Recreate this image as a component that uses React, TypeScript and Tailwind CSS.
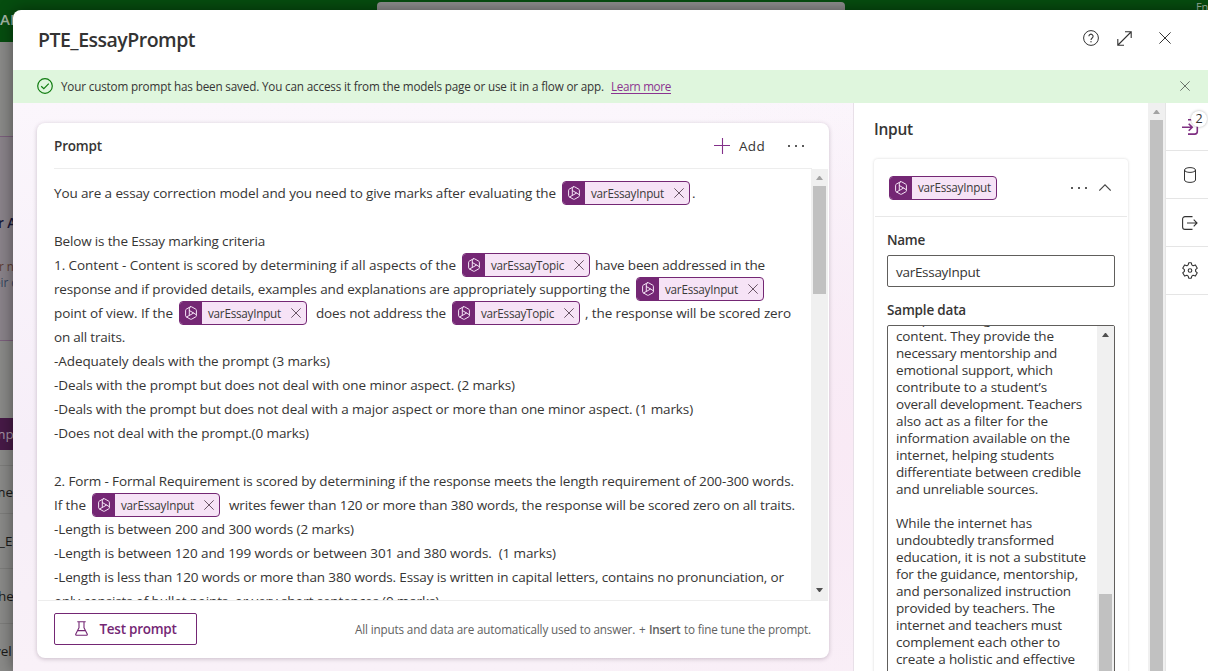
import { useLayoutEffect, useRef } from "react";
import type { ReactNode } from "react";

/* A run of text whose tracking is adjusted so that it fills a given width. */
function Fit({ w, className = "", children }: { w: number; className?: string; children: string }) {
  const ref = useRef<HTMLSpanElement>(null);
  useLayoutEffect(() => {
    const el = ref.current;
    if (!el) return;
    el.style.width = "auto";
    el.style.letterSpacing = "0px";
    const natural = el.getBoundingClientRect().width;
    el.style.letterSpacing = `${(w - 1 - natural) / children.length}px`;
    el.style.width = `${w}px`;
  }, [w, children]);
  return (
    <span ref={ref} className={`inline-block shrink-0 whitespace-pre ${className}`}>
      {children}
    </span>
  );
}

function PromptGlyph() {
  return (
    <svg width="14" height="14" viewBox="0 0 14 14" fill="none" stroke="#f4e4f5" strokeLinejoin="round" strokeLinecap="round">
      <path d="M6.4.8 2.200 3.200a1.200 1.200 0 0 0-.6 1v5.600a1.200 1.200 0 0 0 .6 1l4.200 2.400a1.200 1.200 0 0 0 1.200 0l4.200-2.400a1.200 1.200 0 0 0 .6-1V4.200a1.200 1.200 0 0 0-.6-1L7.600.8a1.200 1.200 0 0 0-1.200 0Z" />
      <path d="M5.300 1.800v7.700L9.600 7 5.300 4.500M9.600 7l2.600 1.700M5.300 9.500l-2.800 1.400" />
    </svg>
  );
}

function Cross({ size, className = "" }: { size: number; className?: string }) {
  return (
    <svg className={className} width={size} height={size} viewBox="0 0 12 12" fill="none" stroke="currentColor" strokeWidth={12 / size}>
      <path d="M.4.4l11.2 11.2M11.6.4.4 11.6" />
    </svg>
  );
}

function Chip({ name, closable = true, className = "" }: { name: string; closable?: boolean; className?: string }) {
  return (
    <span className={`flex h-6 shrink-0 overflow-hidden rounded-[4px] border border-[#742774] bg-[#f6e3f6] ${closable ? "w-32" : "w-27"} ${className}`}>
      <span className="flex w-[22px] shrink-0 items-center justify-center bg-[#742774]">
        <PromptGlyph />
      </span>
      <span className="flex flex-1 items-center pl-[6px] text-[11.7px] leading-[22px] text-[#3b3a39]">
        <Fit w={74} className="-mt-px">{name}</Fit>
        {closable && <Cross size={10} className="ml-[9px] text-[#6a5566]" />}
      </span>
    </span>
  );
}

function Line({ children }: { children?: ReactNode }) {
  return <div className="flex h-6 shrink-0 items-center">{children}</div>;
}

function Arrow({ up, color }: { up?: boolean; color: string }) {
  return (
    <svg width="7" height="4" viewBox="0 0 7 4" fill={color}>
      <path d={up ? "M3 0h1l3 4H0z" : "M0 0h7L4 4H3z"} />
    </svg>
  );
}

function Dots() {
  return (
    <span className="flex gap-[5px]">
      <i className="size-[2px] bg-[#5a5a5a]" />
      <i className="size-[2px] bg-[#5a5a5a]" />
      <i className="size-[2px] bg-[#5a5a5a]" />
    </span>
  );
}

const sample: [string, number][] = [
  ["comprehending the", 118],
  ["content. They provide the", 159],
  ["necessary mentorship and", 162],
  ["emotional support, which", 158],
  ["contribute to a student’s", 152],
  ["overall development. Teachers", 187],
  ["also act as a filter for the", 153],
  ["information available on the", 175],
  ["internet, helping students", 159],
  ["differentiate between credible", 186],
  ["and unreliable sources.", 143],
  ["", 0],
  ["While the internet has", 137],
  ["undoubtedly transformed", 159],
  ["education, it is not a substitute", 191],
  ["for the guidance, mentorship,", 183],
  ["and personalized instruction", 176],
  ["provided by teachers. The", 160],
  ["internet and teachers must", 167],
  ["complement each other to", 165],
  ["create a holistic and effective", 180],
];

function PageBehind() {
  return (
    <div className="flex h-full flex-col bg-[#8a8a88] text-[13.5px] text-[#1b1a19]">
      <div className="flex h-[42px] shrink-0 bg-[#064d0f]">
        <span className="mt-[9px] w-[377px] text-[15px] leading-5 font-semibold text-[#a3b5a4]">AI</span>
        <span className="mt-[2px] w-[468px] rounded-[4px] bg-[#8e8e8e]" />
        <span className="ml-auto w-3 text-[11px] leading-[13px] tracking-[-0.5px] whitespace-nowrap text-[#9db19e]">En</span>
      </div>
      <div className="mt-[94px] flex h-[205px] shrink-0 flex-col border-y border-[#7b5f7c] bg-[#8a838a] whitespace-nowrap">
        <span className="mt-[76px] -ml-[2px] h-5 font-semibold text-[#1a1a3a]">r A</span>
        <span className="mt-[25px] -ml-px h-4 text-[11.7px] leading-4 text-[#5e3d33]">r n</span>
        <span className="-ml-[6px] h-4 text-[11.7px] leading-4 text-[#33435e]">eir c</span>
      </div>
      <div className="mt-[77px] flex h-8 shrink-0 items-center bg-[#471a47] text-[#a595a5]">
        <span className="-ml-[7px]">mp</span>
      </div>
      <div className="mt-[15px] flex h-12 shrink-0 items-center border-t border-[#7d7d7b] pt-1">
        <span className="-ml-[7px]">me</span>
      </div>
      <div className="flex h-[55px] shrink-0 items-center border-t border-[#7d7d7b]">
        <span className="-ml-px">_E</span>
      </div>
      <div className="flex h-[55px] shrink-0 items-center border-t border-[#7d7d7b]">
        <span className="-ml-[2px]">he</span>
      </div>
      <div className="flex h-[55px] shrink-0 items-center border-t border-[#7d7d7b]">
        <span className="-ml-[6px]">vel</span>
      </div>
    </div>
  );
}

function PromptCard() {
  return (
    <section className="flex h-[535px] flex-col overflow-hidden rounded-lg bg-white shadow-[0_1px_4px_rgba(60,30,60,0.25)]">
      <div className="mx-[17px] flex h-[46px] shrink-0 items-center border-b border-[#ededed]">
        <Fit w={49} className="font-semibold">Prompt</Fit>
        <svg className="ml-auto" width="16" height="16" viewBox="0 0 16 16" stroke="#83308a" strokeWidth="1.1">
          <path d="M8.500 0v16M0 7.500h16" />
        </svg>
        <Fit w={27} className="ml-[9px] mr-[22px]">Add</Fit>
        <span className="mr-[8px]">
          <Dots />
        </span>
      </div>
      <div className="flex h-[431px] shrink-0">
        <div className="flex flex-1 flex-col overflow-hidden pt-3 pl-[17px]">
          <Line>
            <Fit w={503}>You are a essay correction model and you need to give marks after evaluating the</Fit>
            <Chip name="varEssayInput" className="ml-[5px]" />
            <span className="ml-[2px]">.</span>
          </Line>
          <Line />
          <Line><Fit w={212}>Below is the Essay marking criteria</Fit></Line>
          <Line>
            <Fit w={403}>1. Content - Content is scored by determining if all aspects of the</Fit>
            <Chip name="varEssayTopic" className="ml-[5px]" />
            <Fit w={171} className="ml-[5px]">have been addressed in the</Fit>
          </Line>
          <Line>
            <Fit w={577}>response and if provided details, examples and explanations are appropriately supporting the</Fit>
            <Chip name="varEssayInput" className="ml-[5px]" />
          </Line>
          <Line>
            <Fit w={120}>point of view. If the</Fit>
            <Chip name="varEssayInput" className="ml-[5px]" />
            <Fit w={131} className="ml-[9px]">does not address the</Fit>
            <Chip name="varEssayTopic" className="ml-[5px]" />
            <Fit w={207} className="ml-[5px]">, the response will be scored zero</Fit>
          </Line>
          <Line><Fit w={72}>on all traits.</Fit></Line>
          <Line><Fit w={277}>-Adequately deals with the prompt (3 marks)</Fit></Line>
          <Line><Fit w={462}>-Deals with the prompt but does not deal with one minor aspect. (2 marks)</Fit></Line>
          <Line><Fit w={640}>-Deals with the prompt but does not deal with a major aspect or more than one minor aspect. (1 marks)</Fit></Line>
          <Line><Fit w={256}>-Does not deal with the prompt.(0 marks)</Fit></Line>
          <Line />
          <Line><Fit w={741}>2. Form - Formal Requirement is scored by determining if the response meets the length requirement of 200-300 words.</Fit></Line>
          <Line>
            <Fit w={33}>If the</Fit>
            <Chip name="varEssayInput" className="ml-[5px]" />
            <Fit w={567} className="ml-[9px]">writes fewer than 120 or more than 380 words, the response will be scored zero on all traits.</Fit>
          </Line>
          <Line><Fit w={301}>-Length is between 200 and 300 words (2 marks)</Fit></Line>
          <Line><Fit w={503}>-Length is between 120 and 199 words or between 301 and 380 words.  (1 marks)</Fit></Line>
          <Line><Fit w={731}>-Length is less than 120 words or more than 380 words. Essay is written in capital letters, contains no pronunciation, or</Fit></Line>
          <Line><Fit w={386}>only consists of bullet points, or very short sentences.(0 marks)</Fit></Line>
        </div>
        <div className="mr-px flex w-[17px] shrink-0 flex-col items-center bg-[#f0f0f0] pt-[7px] pb-[8px]">
          <Arrow up color="#a3a3a3" />
          <span className="mt-[6px] h-[108px] w-[13px] bg-[#c1c1c1]" />
          <span className="mt-auto"><Arrow color="#505050" /></span>
        </div>
      </div>
      <div className="mx-px flex flex-1 items-center border-t border-[#ededed] px-4 pb-[2px]">
        <button className="flex h-8 w-[143px] items-center rounded-[2px] border border-[#742774] pl-5 text-[#742774]">
          <svg width="13" height="15" viewBox="0 0 13 15" fill="none" stroke="#742774" strokeWidth="1.1" strokeLinejoin="round">
            <path d="M2.3.7h8.4M4 .7v6L.8 13a.9.9 0 0 0 .8 1.3h9.8a.9.9 0 0 0 .8-1.3L9 6.700V.7M2.5 9.600h8" />
          </svg>
          <Fit w={78} className="ml-[11px] font-semibold">Test prompt</Fit>
        </button>
        <span className="ml-auto flex text-[11.7px] text-[#616161]">
          <Fit w={284}>All inputs and data are automatically used to answer. </Fit>
          <Fit w={10}>+ </Fit>
          <Fit w={35} className="font-semibold">Insert </Fit>
          <Fit w={128}>to fine tune the prompt.</Fit>
        </span>
      </div>
    </section>
  );
}

function InputPane() {
  return (
    <aside className="flex w-[312px] shrink-0 border-l border-[#e8e0e8] bg-white">
      <div className="flex flex-1 flex-col overflow-hidden px-5">
        <h2 className="mt-[14px] h-6 shrink-0 text-[15.500px] leading-6 font-semibold"><Fit w={40}>Input</Fit></h2>
        <div className="mt-[18px] flex h-[540px] w-[254px] shrink-0 flex-col rounded-t-[4px] bg-white shadow-[0_0_3px_rgba(0,0,0,0.16)]">
          <div className="mx-px flex h-[58px] shrink-0 items-center border-b border-[#e8e8e8] pl-[14px]">
            <Chip name="varEssayInput" closable={false} />
            <span className="ml-auto"><Dots /></span>
            <svg className="mr-[16px] ml-[12px]" width="12" height="7" viewBox="0 0 12 7" fill="none" stroke="#444" strokeWidth="1.1">
              <path d="M.3 6.500 6 .8l5.700 5.700" />
            </svg>
          </div>
          <div className="flex flex-col px-[13px]">
            <span className="mt-[13px] h-5 leading-5 font-semibold"><Fit w={39}>Name</Fit></span>
            <div className="mt-[5px] flex h-8 shrink-0 items-center rounded-[2px] border border-[#605e5c] pt-[2px] pl-2">
              <Fit w={85}>varEssayInput</Fit>
            </div>
            <span className="mt-[13px] h-5 leading-5 font-semibold"><Fit w={80}>Sample data</Fit></span>
            <div className="mt-[5px] flex h-[380px] overflow-hidden rounded-[2px] border border-[#605e5c]">
              <div className="-mt-[15px] flex flex-1 flex-col pl-2">
                {sample.map(([text, w], i) => (
                  <div key={i} className="flex h-[17px] shrink-0 items-center leading-[17px]">
                    {text && <Fit w={w}>{text}</Fit>}
                  </div>
                ))}
              </div>
              <div className="flex w-[17px] shrink-0 flex-col items-center bg-[#f0f0f0] pt-[7px]">
                <Arrow up color="#505050" />
                <span className="mt-[257px] w-[13px] flex-1 bg-[#c1c1c1]" />
              </div>
            </div>
          </div>
        </div>
      </div>
      <div className="flex w-[17px] shrink-0 flex-col items-center bg-[#f0f0f0] pt-[7px]">
        <Arrow up color="#a3a3a3" />
        <span className="mt-[6px] w-[13px] flex-1 bg-[#c1c1c1]" />
      </div>
    </aside>
  );
}

function Rail() {
  const cell = "relative flex h-12 w-full shrink-0 items-center justify-center border-b border-[#e5e5e5] pl-[6px]";
  return (
    <nav className="flex w-[43px] shrink-0 flex-col border-l border-[#e5e5e5] bg-white text-[#333]">
      <div className={cell}>
        <svg width="18" height="18" viewBox="0 0 18 18" fill="none" stroke="#7f2f82" strokeWidth="1.600">
          <path d="M7 1.700h5M1 9.200h10M7.700 5.700l3.500 3.500-3.500 3.500M16.300 8v5.500a2.600 2.600 0 0 1-2.600 2.600H7" />
        </svg>
        <span className="absolute top-[8px] left-[25px] flex size-[16px] items-center justify-center rounded-full bg-white text-[12.5px] shadow-[0_0_3px_rgba(0,0,0,0.3)]">2</span>
      </div>
      <div className={cell}>
        <svg width="12" height="16" viewBox="0 0 12 16" fill="none" stroke="currentColor">
          <ellipse cx="6" cy="3" rx="5.500" ry="2.400" />
          <path d="M.5 3v10c0 1.300 2.500 2.400 5.500 2.400s5.500-1.100 5.500-2.400V3" />
        </svg>
      </div>
      <div className={cell}>
        <svg width="16" height="14" viewBox="0 0 16 14" fill="none" stroke="currentColor" strokeWidth="1.100">
          <path d="M10.500.6H3A2.400 2.400 0 0 0 .6 3v8A2.400 2.400 0 0 0 3 13.400h7.500M5 7h10M11.700 3.700 15 7l-3.300 3.300" />
        </svg>
      </div>
      <div className={cell}>
        <svg width="16" height="17" viewBox="0 0 16 17" fill="none" stroke="currentColor" strokeWidth="1.100" strokeLinejoin="round">
          <circle cx="8" cy="8.500" r="1.800" />
          <path d="M6.700.8h2.600l.5 2.100 1.300.8 2.300-.8 1.900 3.300-1.700 1.500v1.600l1.700 1.500-1.900 3.300-2.300-.8-1.300.8-.5 2.100H6.700l-.5-2.100-1.300-.8-2.300.8-1.900-3.300 1.700-1.500V7.700L.7 6.200l1.900-3.300 2.300.8 1.300-.8z" />
        </svg>
      </div>
    </nav>
  );
}

export default function App() {
  return (
    <div className="relative h-[671px] w-[1208px] overflow-hidden font-['Open_Sans','Noto_Sans',sans-serif] text-[13.5px] leading-5 text-[#363534]">
      <PageBehind />
      <main className="absolute inset-0 mt-[10px] ml-[13px] flex flex-col overflow-hidden rounded-tl-lg bg-white shadow-[0_0_16px_rgba(0,0,0,0.45)]">
        <header className="flex h-[60px] shrink-0 items-center pl-[25px] text-[#333]">
          <h1 className="text-[19.500px] leading-7 font-semibold"><Fit w={158}>PTE_EssayPrompt</Fit></h1>
          <div className="mr-[37px] mb-1 ml-auto flex items-center">
            <svg width="16" height="16" viewBox="0 0 16 16" fill="none" stroke="currentColor">
              <circle cx="8" cy="8" r="7.400" />
              <path d="M5.900 6.300a2.100 2.100 0 1 1 3.300 1.700C8.400 8.600 8 9 8 10" strokeWidth="1.100" />
              <circle cx="8" cy="11.700" r=".7" fill="currentColor" stroke="none" />
            </svg>
            <svg className="ml-[18px]" width="15" height="15" viewBox="0 0 15 15" fill="none" stroke="currentColor" strokeWidth="1.100">
              <path d="M1 14 14 1M8 .8h6.200V7M.8 8v6.200H7" />
            </svg>
            <Cross size={12} className="ml-[27px]" />
          </div>
        </header>
        <div className="flex h-[33px] shrink-0 items-center bg-[#dff6dd] pb-px pl-6 text-[11.7px]">
          <svg width="16" height="16" viewBox="0 0 16 16" fill="none" stroke="#107c10" strokeWidth="1.200">
            <circle cx="8" cy="8" r="7.300" />
            <path d="M4.200 8.200l2.600 2.500 5-5.100" />
          </svg>
          <Fit w={544} className="ml-2">Your custom prompt has been saved. You can access it from the models page or use it in a flow or app.</Fit>
          <Fit w={61} className="ml-[6px] text-[#8b3390] underline underline-offset-2">Learn more</Fit>
          <Cross size={10} className="mr-[18px] ml-auto text-[#6a756a]" />
        </div>
        <div className="flex min-h-0 flex-1">
          <div className="w-[840px] shrink-0 bg-[radial-gradient(circle_at_100%_60%,#f9eaf5,transparent_40%),linear-gradient(180deg,#fbf6fc,#f6eef8_60%,#f9f1f8)] pt-5 pr-6 pl-6">
            <PromptCard />
          </div>
          <InputPane />
          <Rail />
        </div>
      </main>
    </div>
  );
}
